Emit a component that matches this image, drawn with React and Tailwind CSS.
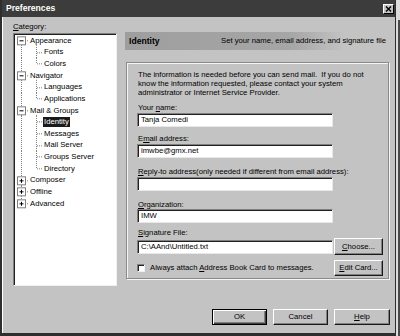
const H = 11.64;

const tree = [
  { t: "Appearance", type: "open", first: true },
  { t: "Fonts", type: "child" },
  { t: "Colors", type: "child", last: true },
  { t: "Navigator", type: "open" },
  { t: "Languages", type: "child" },
  { t: "Applications", type: "child", last: true },
  { t: "Mail & Groups", type: "open" },
  { t: "Identity", type: "child", sel: true },
  { t: "Messages", type: "child" },
  { t: "Mail Server", type: "child" },
  { t: "Groups Server", type: "child" },
  { t: "Directory", type: "child", last: true },
  { t: "Composer", type: "closed" },
  { t: "Offline", type: "closed" },
  { t: "Advanced", type: "closed", end: true },
];

function TreeRow({ item }) {
  const c = H / 2;
  const dot = { stroke: "#808080", strokeWidth: 1, strokeDasharray: "1 1" };
  const isChild = item.type === "child";
  return (
    <div className="flex items-center h-[11.64px]">
      <svg width={isChild ? 28 : 14} height={H} className="shrink-0">
        {isChild ? (
          <>
            <line x1="6.5" y1="0" x2="6.5" y2={H} {...dot} />
            <line x1="21.5" y1="0" x2="21.5" y2={item.last ? c : H} {...dot} />
            <line x1="22" y1={c} x2="28" y2={c} {...dot} />
          </>
        ) : (
          <>
            <line x1="6.5" y1={item.first ? c : 0} x2="6.5" y2={item.end ? c : H} {...dot} />
            <line x1="10" y1={c} x2="14" y2={c} {...dot} />
            <rect x="2.5" y={c - 4} width="8" height="8" fill="#fff" stroke="#808080" />
            <line x1="4.5" y1={c} x2="8.5" y2={c} stroke="#000" />
            {item.type === "closed" && <line x1="6.5" y1={c - 2} x2="6.5" y2={c + 2} stroke="#000" />}
          </>
        )}
      </svg>
      {item.type === "open" && (
        <svg width="10" height={H} className="absolute ml-[14px] pointer-events-none" style={{ display: "none" }} />
      )}
      <span className={item.sel ? "ml-[0px] px-[1px] bg-[#1a1a1a] text-white leading-[10px]" : "ml-[1px] leading-[10px]"}>
        {item.t}
      </span>
    </div>
  );
}

function Tree() {
  const c = H / 2;
  return (
    <div className="relative">
      {tree.map((item, i) => (
        <div key={i} className="relative">
          <TreeRow item={item} />
          {item.type === "open" && (
            <svg width="24" height={H} className="absolute left-0 top-0 pointer-events-none">
              <line x1="21.5" y1={c + 4} x2="21.5" y2={H} stroke="#808080" strokeDasharray="1 1" />
            </svg>
          )}
        </div>
      ))}
    </div>
  );
}

function Btn({ children, def, className = "" }) {
  return (
    <div
      className={
        "h-full flex items-center justify-center bg-[#c3c3c3] " +
        (def
          ? "border border-black shadow-[inset_1px_1px_0_#fff,inset_-1px_-1px_0_#404040,inset_-2px_-2px_0_#808080] "
          : "border border-t-white border-l-white border-r-[#1a1a1a] border-b-[#1a1a1a] shadow-[inset_-1px_-1px_0_#808080] ") +
        className
      }
    >
      {children}
    </div>
  );
}

function Field({ value, className = "" }) {
  return (
    <div
      className={
        "h-[14px] w-[196px] bg-white border border-t-[#808080] border-l-[#808080] border-b-[#e8e8e8] border-r-[#e8e8e8] shadow-[inset_1px_1px_0_#202020] pl-[3px] flex items-center leading-none " +
        className
      }
    >
      {value}
    </div>
  );
}

function Label({ children, className = "" }) {
  return <div className={"h-[9px] leading-[9px] " + className}>{children}</div>;
}

export default function App() {
  return (
    <div className="w-[400px] h-[336px] bg-[#c3c3c3] flex overflow-hidden font-['Liberation_Sans',Arial,sans-serif] text-[7.7px] text-black">
      <div className="w-[396px] h-full flex flex-col border-l-2 border-r border-b-[3px] border-[#2e2e2e]">
        <div className="h-[17px] shrink-0 bg-[#3c3c3c] flex items-center justify-between pl-[4px] pr-[1px]">
          <span className="text-white font-bold text-[8.6px]">Preferences</span>
          <div className="w-[11px] h-[10px] bg-[#c3c3c3] border border-t-white border-l-white border-b-black border-r-black flex items-center justify-center">
            <svg width="7" height="6" viewBox="0 0 7 6">
              <path d="M1 0.5 L6 5.5 M6 0.5 L1 5.5" stroke="#000" strokeWidth="1.4" />
            </svg>
          </div>
        </div>
        <div className="flex-1 flex pl-[10px] pt-[3px] border-l border-white">
          <div className="w-[104px] flex flex-col">
            <div className="h-[13px] flex items-center">
              <span>
                <span className="underline">C</span>ategory:
              </span>
            </div>
            <div className="h-[253px] bg-white border border-t-[#808080] border-l-[#808080] border-b-[#f0f0f0] border-r-[#f0f0f0] shadow-[inset_1px_1px_0_#202020] pl-[1px] pt-[1px]">
              <Tree />
            </div>
          </div>
          <div className="ml-[8px] w-[268px] flex flex-col pt-[12px]">
            <div className="h-[18px] flex items-center justify-between pl-[4px] pr-[7px] bg-[linear-gradient(to_right,#9e9e9e_0%,#a6a6a6_62%,#c3c3c3_82%)]">
              <span className="font-bold text-[8.6px]">Identity</span>
              <span>Set your name, email address, and signature file</span>
            </div>
            <div className="mt-[12px] ml-[1px] w-[263px] h-[217px] border border-[#8a8a8a] shadow-[inset_1px_1px_0_#f4f4f4,1px_1px_0_#f4f4f4] pl-[11px] pt-[7px] pr-[5px] flex flex-col">
              <div className="leading-[9px]">
                <div>The information is needed before you can send mail.&nbsp; If you do not</div>
                <div>know the information requested, please contact your system</div>
                <div>administrator or Internet Service Provider.</div>
              </div>
              <Label className="mt-[6px]">
                Your <span className="underline">n</span>ame:
              </Label>
              <Field value="Tanja Comedi" className="mt-[1px] -ml-[1px]" />
              <Label className="mt-[7px]">
                E<span className="underline">m</span>ail address:
              </Label>
              <Field value="imwbe@gmx.net" className="mt-[1px] -ml-[1px]" />
              <Label className="mt-[9px]">
                <span className="underline">R</span>eply-to address(only needed if different from email address):
              </Label>
              <Field value="" className="mt-[1px] -ml-[1px]" />
              <Label className="mt-[9px]">
                <span className="underline">O</span>rganization:
              </Label>
              <Field value="IMW" className="-ml-[1px]" />
              <Label className="mt-[5px]">
                <span className="underline">S</span>ignature File:
              </Label>
              <div className="mt-[1px] -ml-[1px] h-[17px] flex items-center gap-[1px]">
                <Field value="C:\AAnd\Untitled.txt" />
                <Btn className="w-[49px]">
                  <span>
                    <span className="underline">C</span>hoose...
                  </span>
                </Btn>
              </div>
              <div className="mt-[5px] -ml-[1px] h-[16px] flex items-center justify-between">
                <div className="flex items-center gap-[5px]">
                  <div className="w-[8px] h-[8px] bg-white border border-t-[#808080] border-l-[#808080] border-b-[#f0f0f0] border-r-[#f0f0f0] shadow-[inset_1px_1px_0_#202020]" />
                  <span>
                    Always attach <span className="underline">A</span>ddress Book Card to messages.
                  </span>
                </div>
                <Btn className="w-[49px]">
                  <span>
                    <span className="underline">E</span>dit Card...
                  </span>
                </Btn>
              </div>
            </div>
            <div className="mt-[30px] h-[16px] flex justify-end gap-[6px] pr-[3px]">
              <Btn def className="w-[55px]">OK</Btn>
              <Btn className="w-[55px]">Cancel</Btn>
              <Btn className="w-[56px]">
                <span>
                  <span className="underline">H</span>elp
                </span>
              </Btn>
            </div>
          </div>
        </div>
      </div>
      <div className="w-[4px] h-full flex flex-col bg-[#dcdcdc]">
        <div className="h-[20px]" />
        <div className="flex-1 border-l-[2px] border-[#dcdcdc] border-r-2 border-r-[#4a4a4a]" />
      </div>
    </div>
  );
}
